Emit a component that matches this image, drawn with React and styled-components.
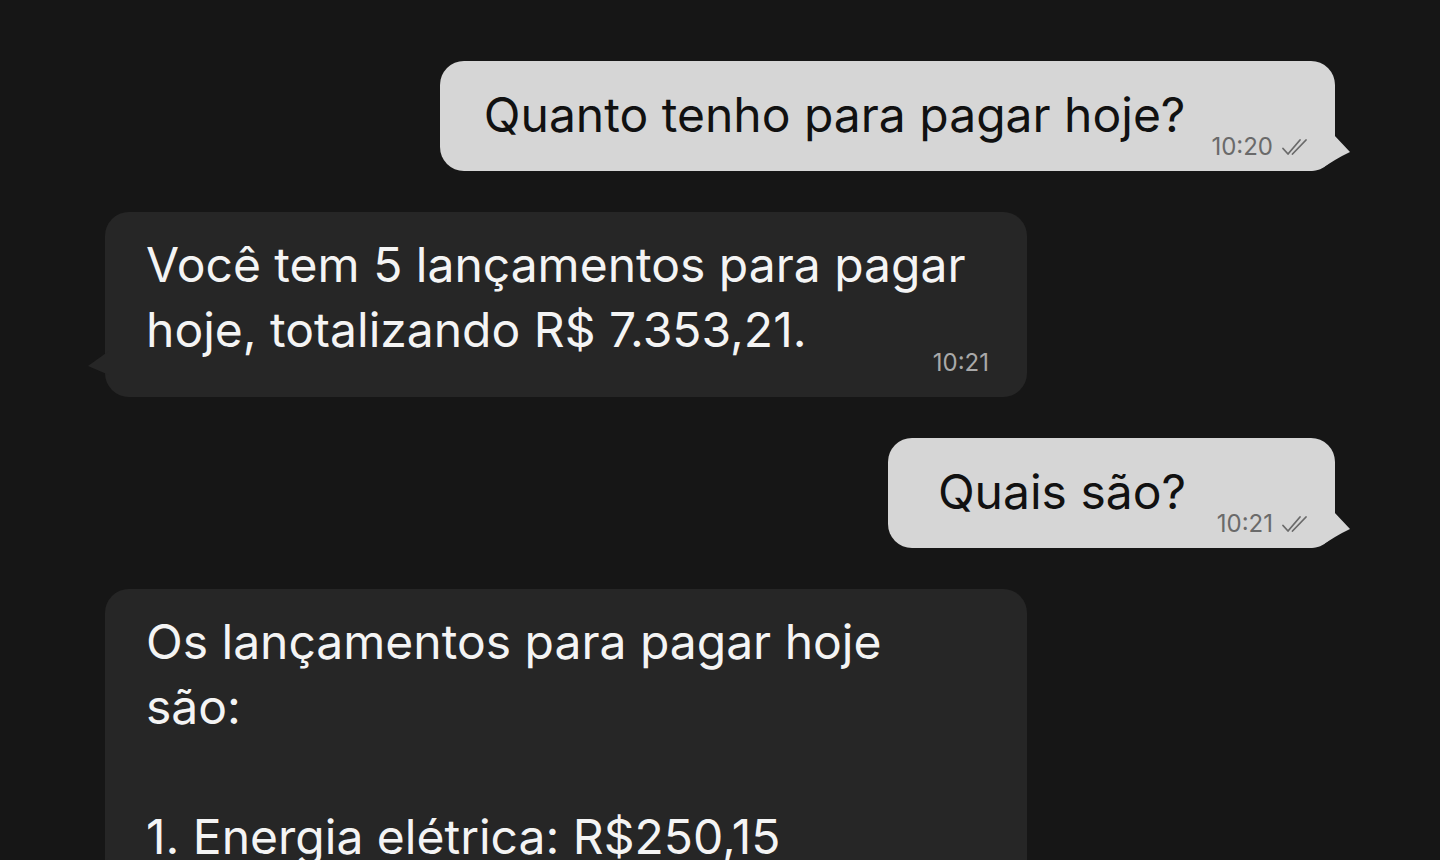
import React from 'react';
import styled, { createGlobalStyle, css } from 'styled-components';

const GlobalStyle = createGlobalStyle`
   *{
      box-sizing: border-box;
   }
   html, body{
      margin: 0;
      padding: 0;
      background: #161616;
   }
   body{
      font-family: Inter, "Noto Sans", "Liberation Sans", sans-serif;
      -webkit-font-smoothing: antialiased;
   }
`;

const Chat = styled.div`
   display: flex;
   flex-direction: column;
   gap: 41px;
   padding: 61px 105px 0;
   height: 860px;
   overflow: hidden;
   background: #161616;
`;

const Bubble = styled.div`
   position: relative;
   display: flex;
   border-radius: 24px;

   ${({ $out }) => $out ? css`
      align-self: flex-end;
      align-items: flex-end;
      background: #d6d6d6;
      color: #111;
      padding: 21px 27px 11px ${({ $pl }) => $pl || 44}px;

      &::after{
         content: '';
         position: absolute;
         right: -16px;
         bottom: 0;
         width: 40px;
         height: 36px;
         background: #d6d6d6;
         clip-path: polygon(23px 0, 39px 17px, 31px 21px, 24px 25px, 16px 30px, 8px 34px, 0 36px, 0 0);
      }
   ` : css`
      align-self: flex-start;
      flex-direction: column;
      width: 922px;
      background: #262626;
      color: #f4f4f4;
      padding: 20px 38px 21px 41px;

      &::after{
         content: '';
         position: absolute;
         left: -17px;
         bottom: 22px;
         width: 21px;
         height: 24px;
         background: #262626;
         clip-path: polygon(21px 0, 0 15px, 21px 24px);
      }
   `}
`;

const Text = styled.div`
   font-size: 48px;
   line-height: 65px;
   letter-spacing: 0;
   white-space: pre-line;
   max-width: 830px;
   padding-bottom: ${({ $out }) => $out ? '13px' : '0'};
`;

const Meta = styled.div`
   display: flex;
   align-items: center;
   justify-content: flex-end;
   gap: 8px;
   font-size: 24px;
   line-height: 26px;
   color: ${({ $out }) => $out ? '#6a6a6a' : '#a9a9a9'};
   ${({ $out }) => $out ? css`
      min-width: 96px;
      margin-left: 26px;
   ` : css`
      margin-top: -12px;
   `}

   svg{
      display: block;
   }
`;

const DoubleCheck = () => (
   <svg width="27" height="18" viewBox="0 0 27 18" fill="none" stroke="currentColor" strokeWidth="1.8" strokeLinecap="round" strokeLinejoin="round">
      <path d="M2 10.5 L7 16 L19 2" />
      <path d="M11.5 16 L25 2" />
   </svg>
);

const Message = ({ out, time, pl, children }) => (
   <Bubble $out={out} $pl={pl}>
      <Text $out={out}>{children}</Text>
      <Meta $out={out}>
         <span>{time}</span>
         {out && <DoubleCheck />}
      </Meta>
   </Bubble>
);

const App = () => {
   return (
      <>
         <GlobalStyle />
         <Chat>
            <Message out time="10:20">Quanto tenho para pagar hoje?</Message>
            <Message time="10:21">Você tem 5 lançamentos para pagar hoje, totalizando R$ 7.353,21.</Message>
            <Message out time="10:21" pl={50}>Quais são?</Message>
            <Message time="10:21">{'Os lançamentos para pagar hoje são:\n\n1. Energia elétrica: R$250,15'}</Message>
         </Chat>
      </>
   );
};

export default App;
